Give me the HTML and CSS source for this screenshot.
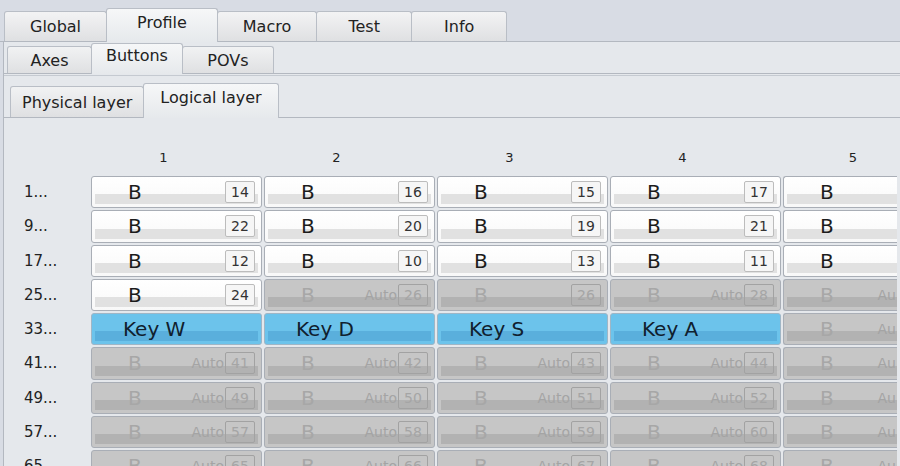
FILE: index.html
```html
<!DOCTYPE html>
<html lang="en">

<head>
    <meta charset="UTF-8">
    <title>Profile - Buttons</title>
    <link rel="stylesheet" href="styles.css">
</head>

<body>
    <ul class="tabs">
        <li class="tab">Global</li>
        <li class="tab on">Profile</li>
        <li class="tab">Macro</li>
        <li class="tab">Test</li>
        <li class="tab">Info</li>
    </ul>
    <div class="panel">
        <ul class="subtabs">
            <li class="subtab">Axes</li>
            <li class="subtab on">Buttons</li>
            <li class="subtab wide">POVs</li>
        </ul>
        <ul class="layers">
            <li class="layer">Physical layer</li>
            <li class="layer on">Logical layer</li>
        </ul>
        <div class="grid">
            <div class="head"></div>
            <div class="head">1</div>
            <div class="head">2</div>
            <div class="head">3</div>
            <div class="head">4</div>
            <div class="head last">5</div>

            <div class="rowname">1...</div>
            <div class="cell"><span class="name">B</span><span class="num">14</span></div>
            <div class="cell"><span class="name">B</span><span class="num">16</span></div>
            <div class="cell"><span class="name">B</span><span class="num">15</span></div>
            <div class="cell"><span class="name">B</span><span class="num">17</span></div>
            <div class="cell cut"><span class="name">B</span></div>

            <div class="rowname">9...</div>
            <div class="cell"><span class="name">B</span><span class="num">22</span></div>
            <div class="cell"><span class="name">B</span><span class="num">20</span></div>
            <div class="cell"><span class="name">B</span><span class="num">19</span></div>
            <div class="cell"><span class="name">B</span><span class="num">21</span></div>
            <div class="cell cut"><span class="name">B</span></div>

            <div class="rowname">17...</div>
            <div class="cell"><span class="name">B</span><span class="num">12</span></div>
            <div class="cell"><span class="name">B</span><span class="num">10</span></div>
            <div class="cell"><span class="name">B</span><span class="num">13</span></div>
            <div class="cell"><span class="name">B</span><span class="num">11</span></div>
            <div class="cell cut"><span class="name">B</span></div>

            <div class="rowname">25...</div>
            <div class="cell"><span class="name">B</span><span class="num">24</span></div>
            <div class="cell off"><span class="name">B</span><span class="auto">Auto</span><span class="num">26</span></div>
            <div class="cell off"><span class="name">B</span><span class="num">26</span></div>
            <div class="cell off"><span class="name">B</span><span class="auto">Auto</span><span class="num">28</span></div>
            <div class="cell off cut"><span class="name">B</span><span class="auto">Au</span></div>

            <div class="rowname">33...</div>
            <div class="cell key"><span class="name">Key W</span></div>
            <div class="cell key"><span class="name">Key D</span></div>
            <div class="cell key"><span class="name">Key S</span></div>
            <div class="cell key"><span class="name">Key A</span></div>
            <div class="cell off cut"><span class="name">B</span><span class="auto">Au</span></div>

            <div class="rowname">41...</div>
            <div class="cell off"><span class="name">B</span><span class="auto">Auto</span><span class="num">41</span></div>
            <div class="cell off"><span class="name">B</span><span class="auto">Auto</span><span class="num">42</span></div>
            <div class="cell off"><span class="name">B</span><span class="auto">Auto</span><span class="num">43</span></div>
            <div class="cell off"><span class="name">B</span><span class="auto">Auto</span><span class="num">44</span></div>
            <div class="cell off cut"><span class="name">B</span><span class="auto">Au</span></div>

            <div class="rowname">49...</div>
            <div class="cell off"><span class="name">B</span><span class="auto">Auto</span><span class="num">49</span></div>
            <div class="cell off"><span class="name">B</span><span class="auto">Auto</span><span class="num">50</span></div>
            <div class="cell off"><span class="name">B</span><span class="auto">Auto</span><span class="num">51</span></div>
            <div class="cell off"><span class="name">B</span><span class="auto">Auto</span><span class="num">52</span></div>
            <div class="cell off cut"><span class="name">B</span><span class="auto">Au</span></div>

            <div class="rowname">57...</div>
            <div class="cell off"><span class="name">B</span><span class="auto">Auto</span><span class="num">57</span></div>
            <div class="cell off"><span class="name">B</span><span class="auto">Auto</span><span class="num">58</span></div>
            <div class="cell off"><span class="name">B</span><span class="auto">Auto</span><span class="num">59</span></div>
            <div class="cell off"><span class="name">B</span><span class="auto">Auto</span><span class="num">60</span></div>
            <div class="cell off cut"><span class="name">B</span><span class="auto">Au</span></div>

            <div class="rowname">65...</div>
            <div class="cell off"><span class="name">B</span><span class="auto">Auto</span><span class="num">65</span></div>
            <div class="cell off"><span class="name">B</span><span class="auto">Auto</span><span class="num">66</span></div>
            <div class="cell off"><span class="name">B</span><span class="auto">Auto</span><span class="num">67</span></div>
            <div class="cell off"><span class="name">B</span><span class="auto">Auto</span><span class="num">68</span></div>
            <div class="cell off cut"><span class="name">B</span><span class="auto">Au</span></div>
        </div>
    </div>
</body>

</html>
```

FILE: styles.css
```css
* {
    margin: 0;
    padding: 0;
    list-style: none;
    box-sizing: border-box;
}

body {
    width: 900px;
    height: 466px;
    overflow: hidden;
    background: #d8dce4;
    font-family: "DejaVu Sans", sans-serif;
    color: #222;
}

/* top tabs */
.tabs {
    display: flex;
    align-items: flex-end;
    height: 42px;
    padding-left: 4px;
    border-bottom: 1px solid #b3b8c0;
}

.tab {
    height: 30px;
    min-width: 96px;
    padding: 0 25px;
    margin-right: -1px;
    border: 1px solid #b9bec6;
    border-bottom: none;
    border-radius: 3px 3px 0 0;
    background: linear-gradient(#f3f3f4, #dfe0e2);
    display: flex;
    align-items: center;
    justify-content: center;
    font-size: 16px;
}

.tab.on {
    height: 34px;
    margin-bottom: -1px;
    padding: 4px 30px 0;
    align-items: flex-start;
    background: linear-gradient(#f6f7f8, #e6e9ec);
}

.panel {
    margin-left: 3px;
    border-left: 1px solid #b3b8c0;
    background: #e5e8ec;
    height: 424px;
    overflow: hidden;
}

/* second row */
.subtabs {
    display: flex;
    align-items: flex-end;
    height: 32px;
    padding-left: 3px;
    border-bottom: 1px solid #b3b8c0;
}

.subtab {
    height: 27px;
    min-width: 85px;
    padding: 0 14px;
    margin-right: -1px;
    border: 1px solid #b9bec6;
    border-bottom: none;
    border-radius: 3px 3px 0 0;
    background: linear-gradient(#f1f2f3, #dfe0e2);
    display: flex;
    align-items: center;
    justify-content: center;
    font-size: 16px;
}

.subtab.wide {
    min-width: 92px;
}

.subtab.on {
    height: 31px;
    margin-bottom: -1px;
    padding-top: 2px;
    align-items: flex-start;
    background: linear-gradient(#f6f7f8, #e6e9ec);
}

/* third row */
.layers {
    display: flex;
    align-items: flex-end;
    height: 43px;
    margin-top: 1px;
    padding-left: 6px;
    border-top: 1px solid #c5cad1;
    border-bottom: 1px solid #b3b8c0;
}

.layer {
    height: 31px;
    padding: 0 11px;
    margin-right: -1px;
    border: 1px solid #b9bec6;
    border-bottom: none;
    border-radius: 3px 3px 0 0;
    background: linear-gradient(#f1f2f3, #dfe0e2);
    display: flex;
    align-items: center;
    font-size: 16px;
}

.layer.on {
    height: 35px;
    margin-bottom: -1px;
    padding: 4px 16px 0;
    align-items: flex-start;
    background: linear-gradient(#f6f7f8, #e6e9ec);
}

/* button grid, last column runs off the window */
.grid {
    display: grid;
    grid-template-columns: 85px repeat(4, 171px) 114px;
    grid-template-rows: 30px;
    grid-auto-rows: 32.25px;
    gap: 2px;
    padding-top: 26px;
}

.head {
    display: flex;
    align-items: center;
    justify-content: center;
    padding: 0 26px 4px 0;
    font-size: 13px;
}

.head.last {
    padding: 0 0 4px 26px;
}

.rowname {
    display: flex;
    align-items: center;
    padding-left: 20px;
    font-size: 15px;
}

.cell {
    display: flex;
    align-items: center;
    padding: 0 6px 0 36px;
    border: 1px solid #a9aeb6;
    border-radius: 3px;
    font-size: 20px;
    color: #1c1c1c;
    background: linear-gradient(#e1e1e1, #e1e1e1) no-repeat 3px calc(100% - 3px) / calc(100% - 6px) 10px, linear-gradient(#ffffff, #f8f8f8);
}

.cell.cut {
    border-right: none;
    border-radius: 3px 0 0 3px;
    padding-right: 0;
    background-size: 100% 10px, auto;
}

.name {
    flex: 1;
}

.auto {
    font-size: 14px;
    color: #a4a4a4;
    margin-right: 1px;
}

.num {
    width: 30px;
    height: 22px;
    flex: none;
    display: flex;
    align-items: center;
    justify-content: center;
    border: 1px solid #bcbcbc;
    border-radius: 2px;
    background: #f6f6f6;
    font-size: 14px;
    color: #333;
}

.cell.off {
    color: #a7a7a7;
    background: linear-gradient(#b2b2b2, #b2b2b2) no-repeat 3px calc(100% - 3px) / calc(100% - 6px) 10px, #c6c6c6;
}

.cell.off.cut {
    background-size: 100% 10px, auto;
}

.off .num {
    background: transparent;
    border-color: #a2a2a2;
    color: #a5a5a5;
}

.cell.key {
    padding-left: 31px;
    color: #10202e;
    border-color: #9fb6c6;
    background: linear-gradient(#5aafdc, #5aafdc) no-repeat 3px calc(100% - 3px) / calc(100% - 6px) 10px, #6cc3eb;
}
```
